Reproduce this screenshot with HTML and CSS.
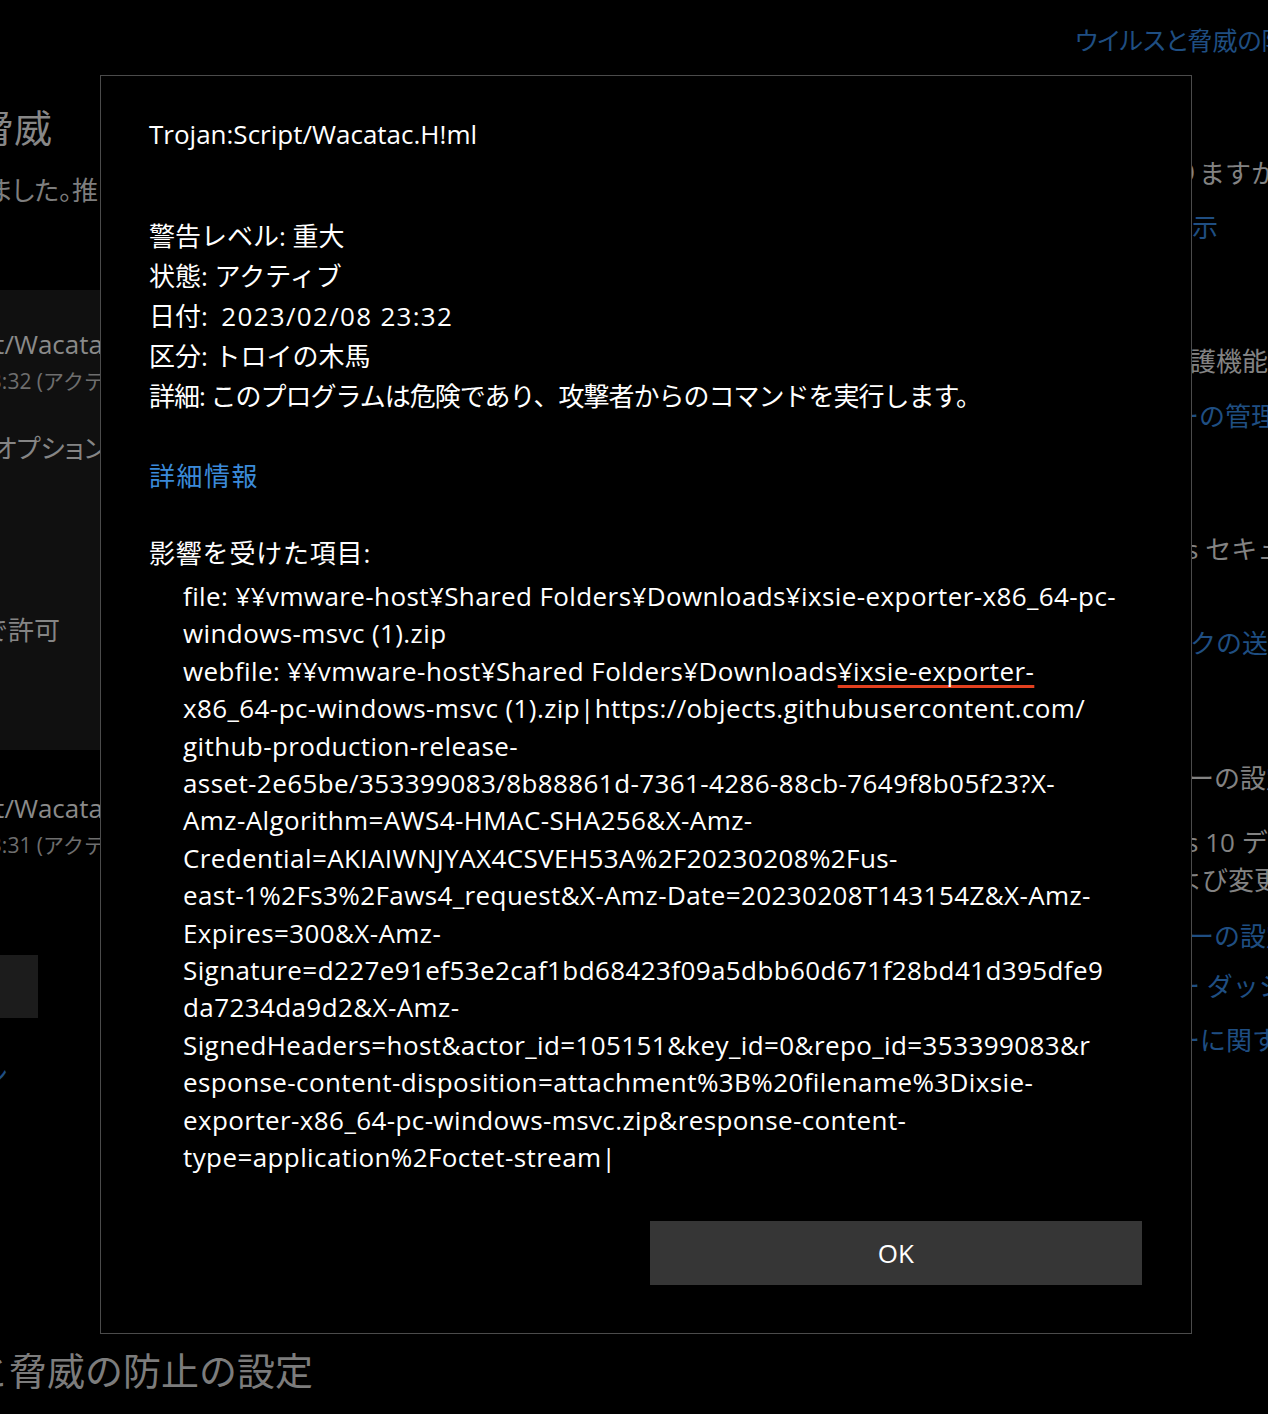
FILE: index.html
```html
<!DOCTYPE html>
<html lang="ja">
<head>
<meta charset="utf-8">
<title>Windows セキュリティ</title>
<link rel="stylesheet" href="styles.css">
</head>
<body>
<div class="screen">
  <div class="backdrop">
    <div class="lcol">
      <div class="bl l-head">現在の脅威</div>
      <div class="bl l-sub">脅威が見つかりました。推</div>
      <div class="l-panel">
        <div class="bl l-name">Trojan:Script/Wacata</div>
        <div class="bl l-meta">2023/02/08 23:32 (アクテ</div>
        <div class="bl l-opt">オプション</div>
        <div class="bl l-allow">デバイスで許可</div>
      </div>
      <div class="bl l-name l-name-2">Trojan:Script/Wacata</div>
      <div class="bl l-meta">2023/02/08 23:31 (アクテ</div>
      <div class="l-box"></div>
      <div class="bl l-frag">ン</div>
    </div>
    <div class="rcol">
      <div class="br r-blue r-head">ウイルスと脅威の防止の設定</div>
      <div class="br r-grey r-1">ありますか?</div>
      <div class="br r-blue r-2">表示</div>
      <div class="br r-grey r-3">保護機能</div>
      <div class="br r-blue r-4">ーの管理</div>
      <div class="br r-grey r-5">s セキュリティ</div>
      <div class="br r-blue r-6">クの送信</div>
      <div class="br r-grey r-7">ーの設定</div>
      <div class="br r-grey r-8">s 10 デバイス</div>
      <div class="br r-grey r-9">よび変更</div>
      <div class="br r-blue r-10">ーの設定</div>
      <div class="br r-blue r-11">ー ダッシュボード</div>
      <div class="br r-blue r-12">ーに関する</div>
    </div>
    <div class="foot">
      <div class="foot-text">ウイルスと脅威の防止の設定</div>
    </div>
  </div>

  <div class="dialog">
    <div class="dlg-title">Trojan:Script/Wacatac.H!ml</div>
    <div class="dlg-info">
      <div>警告レベル: 重大</div>
      <div>状態: アクティブ</div>
      <div>日付:&nbsp; <span class="num">2023/02/08 23:32</span></div>
      <div>区分: トロイの木馬</div>
      <div class="dlg-detail">詳細: このプログラムは危険であり、攻撃者からのコマンドを実行します。</div>
    </div>
    <a class="dlg-link">詳細情報</a>
    <div class="dlg-label">影響を受けた項目:</div>
    <div class="dlg-items">
      <div>file: ¥¥vmware-host¥Shared Folders¥Downloads¥ixsie-exporter-x86_64-pc-</div>
      <div>windows-msvc (1).zip</div>
      <div>webfile: ¥¥vmware-host¥Shared Folders¥Downloads<span class="mark">¥ixsie-exporter-</span></div>
      <div>x86_64-pc-windows-msvc (1).zip|https://objects.githubusercontent.com/</div>
      <div>github-production-release-</div>
      <div>asset-2e65be/353399083/8b88861d-7361-4286-88cb-7649f8b05f23?X-</div>
      <div>Amz-Algorithm=AWS4-HMAC-SHA256&amp;X-Amz-</div>
      <div>Credential=AKIAIWNJYAX4CSVEH53A%2F20230208%2Fus-</div>
      <div>east-1%2Fs3%2Faws4_request&amp;X-Amz-Date=20230208T143154Z&amp;X-Amz-</div>
      <div>Expires=300&amp;X-Amz-</div>
      <div>Signature=d227e91ef53e2caf1bd68423f09a5dbb60d671f28bd41d395dfe9</div>
      <div>da7234da9d2&amp;X-Amz-</div>
      <div>SignedHeaders=host&amp;actor_id=105151&amp;key_id=0&amp;repo_id=353399083&amp;r</div>
      <div>esponse-content-disposition=attachment%3B%20filename%3Dixsie-</div>
      <div>exporter-x86_64-pc-windows-msvc.zip&amp;response-content-</div>
      <div>type=application%2Foctet-stream|</div>
    </div>
    <div class="dlg-actions">
      <button class="btn-ok" type="button">OK</button>
    </div>
  </div>
</div>
</body>
</html>
```

FILE: styles.css
```css
* {
  box-sizing: border-box;
  margin: 0;
  padding: 0;
}

html, body {
  background: #000;
}

body {
  margin: 0;
  font-family: "Open Sans", "Noto Sans CJK JP", sans-serif;
  color: #fff;
}

.screen {
  position: relative;
  width: 1268px;
  height: 1414px;
  overflow: hidden;
  background: #000;
}

/* ---------- dimmed page behind the dialog ---------- */
.backdrop {
  display: grid;
  grid-template-columns: 101px 1fr 77px;
  grid-template-rows: 1330px 84px;
  width: 100%;
  height: 100%;
}

.lcol {
  grid-column: 1;
  grid-row: 1;
  display: flex;
  flex-direction: column;
  overflow: hidden;
}

.bl {
  display: flex;
  justify-content: flex-end;
  white-space: nowrap;
  font-size: 26px;
  line-height: 36px;
}

.l-head {
  font-size: 38px;
  line-height: 50px;
  color: #878787;
  margin-top: 102px;
  padding-right: 49px;
}

.l-sub {
  color: #7e7e7e;
  margin-top: 20px;
  padding-right: 3px;
  font-feature-settings: "palt";
}

.l-panel {
  margin-top: 82px;
  height: 460px;
  background: #101010;
  display: flex;
  flex-direction: column;
  padding-top: 36px;
}

.l-name {
  color: #8a8a8a;
  margin-right: -2px;
}

.l-name-2 {
  margin-top: 40px;
}

.l-meta {
  font-size: 21px;
  line-height: 30px;
  color: #6e6e6e;
  margin-top: 4px;
  margin-right: -4px;
}

.l-opt {
  color: #858585;
  margin-top: 34px;
  margin-right: -6px;
  font-feature-settings: "palt";
}

.l-allow {
  color: #858585;
  margin-top: 146px;
  padding-right: 41px;
}

.l-box {
  margin-top: 95px;
  width: 38px;
  height: 63px;
  background: #1c1c1c;
}

.l-frag {
  color: #1f4e82;
  margin-top: 39px;
  padding-right: 93px;
}

.rcol {
  grid-column: 3;
  grid-row: 1;
  display: flex;
  flex-direction: column;
}

.br {
  white-space: nowrap;
  font-size: 26px;
  line-height: 36px;
}

.r-blue { color: #1f4e82; }
.r-grey { color: #838383; }

.r-head {
  margin-top: 22px;
  margin-left: -116px;
  font-size: 25px;
  font-feature-settings: "palt";
}
.r-1 { margin-top: 97px; margin-left: -44px; }
.r-2 { margin-top: 18px; margin-left: -25px; }
.r-3 { margin-top: 98px; margin-left: -27px; }
.r-4 { margin-top: 19px; margin-left: -18px; }
.r-5 { margin-top: 97px; margin-left: -5px; }
.r-6 { margin-top: 58px; margin-left: -1px; }
.r-7 { margin-top: 99px; margin-left: -3px; }
.r-8 { margin-top: 28px; margin-left: -5px; }
.r-9 { margin-top: 2px; margin-left: -15px; }
.r-10 { margin-top: 20px; margin-left: -3px; }
.r-11 { margin-top: 14px; margin-left: -17px; }
.r-12 { margin-top: 18px; margin-left: -17px; }

.foot {
  grid-column: 1 / -1;
  grid-row: 2;
  padding-top: 15px;
}

.foot-text {
  width: 313px;
  display: flex;
  justify-content: flex-end;
  white-space: nowrap;
  font-size: 38px;
  line-height: 50px;
  color: #7c7c7c;
}

/* ---------- dialog ---------- */
.dialog {
  position: absolute;
  left: 100px;
  top: 75px;
  width: 1092px;
  height: 1259px;
  background: #000;
  border: 1px solid #4b4b4b;
  padding: 38px 49px 48px 48px;
  display: flex;
  flex-direction: column;
  font-size: 26px;
  color: #fff;
}

.dlg-title {
  line-height: 40px;
}

.dlg-info {
  margin-top: 62px;
  line-height: 40px;
}

.num {
  letter-spacing: 1.3px;
}

.dlg-detail {
  letter-spacing: -1px;
}

.dlg-link {
  display: block;
  margin-top: 40px;
  line-height: 40px;
  color: #3b8ad9;
  align-self: flex-start;
  letter-spacing: 1.5px;
}

.dlg-label {
  margin-top: 37px;
  line-height: 40px;
  letter-spacing: 0.8px;
}

.dlg-items {
  margin-top: 5px;
  padding-left: 34px;
  line-height: 37.4px;
  white-space: nowrap;
  letter-spacing: 0.4px;
}

.mark {
  text-decoration: underline;
  text-decoration-color: #e3401f;
  text-decoration-thickness: 3px;
  text-underline-offset: 4px;
  text-decoration-skip-ink: none;
}

.dlg-actions {
  margin-top: auto;
  display: grid;
  grid-template-columns: 1fr 1fr;
  column-gap: 8px;
}

.btn-ok {
  grid-column: 2;
  height: 64px;
  border: none;
  background: #363636;
  color: #fff;
  font-family: inherit;
  font-size: 26px;
}
```
